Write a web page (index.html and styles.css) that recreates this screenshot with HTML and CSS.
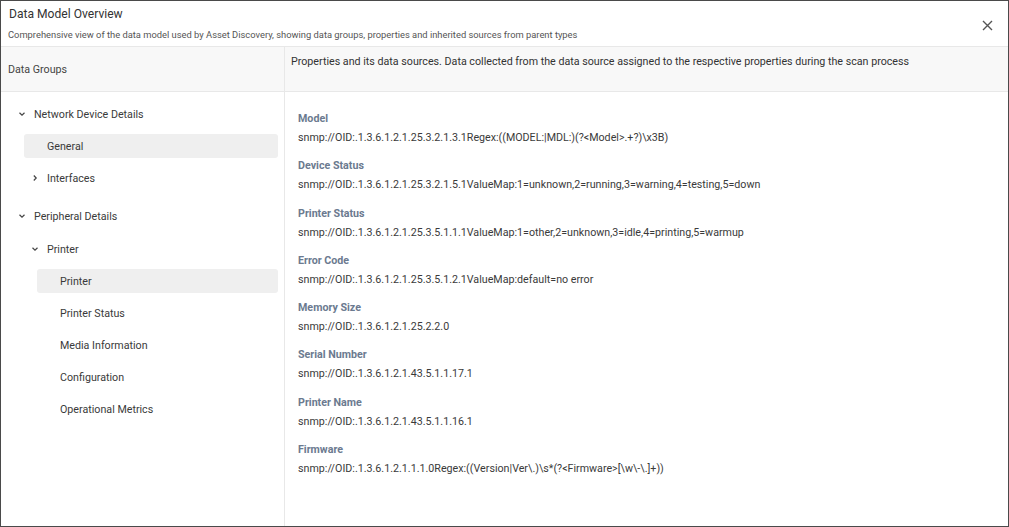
FILE: index.html
```html
<!DOCTYPE html>
<html>
<head>
<meta charset="utf-8">
<link rel="stylesheet" href="styles.css">
</head>
<body>
<div class="dialog">
  <header class="dlg-head">
    <div class="titles">
      <div class="title">Data Model Overview</div>
      <div class="subtitle">Comprehensive view of the data model used by Asset Discovery, showing data groups, properties and inherited sources from parent types</div>
    </div>
    <button class="close" aria-label="Close">
      <svg width="11" height="11" viewBox="0 0 11 11"><path d="M1 1L10 10M10 1L1 10" stroke="#555" stroke-width="1.4" fill="none"/></svg>
    </button>
  </header>
  <div class="main">
    <aside class="left">
      <div class="left-head">Data Groups</div>
      <div class="tree">
        <div class="group">
          <div class="row lvl0"><span class="lead"><svg class="chev" width="8" height="8" viewBox="0 0 8 8"><path d="M1.5 2.8L4 5.2L6.5 2.8" stroke="#444" stroke-width="1.2" fill="none"/></svg></span><span>Network Device Details</span></div>
          <div class="row lvl1 active"><span class="lead"></span><span>General</span></div>
          <div class="row lvl1"><span class="lead"><svg class="chev" width="8" height="8" viewBox="0 0 8 8"><path d="M2.8 1.5L5.2 4L2.8 6.5" stroke="#444" stroke-width="1.2" fill="none"/></svg></span><span>Interfaces</span></div>
        </div>
        <div class="group">
          <div class="row lvl0 group-title"><span class="lead"><svg class="chev" width="8" height="8" viewBox="0 0 8 8"><path d="M1.5 2.8L4 5.2L6.5 2.8" stroke="#444" stroke-width="1.2" fill="none"/></svg></span><span>Peripheral Details</span></div>
          <div class="row lvl1"><span class="lead"><svg class="chev" width="8" height="8" viewBox="0 0 8 8"><path d="M1.5 2.8L4 5.2L6.5 2.8" stroke="#444" stroke-width="1.2" fill="none"/></svg></span><span>Printer</span></div>
          <div class="row lvl2 active"><span class="lead"></span><span>Printer</span></div>
          <div class="row lvl2"><span class="lead"></span><span>Printer Status</span></div>
          <div class="row lvl2"><span class="lead"></span><span>Media Information</span></div>
          <div class="row lvl2"><span class="lead"></span><span>Configuration</span></div>
          <div class="row lvl2"><span class="lead"></span><span>Operational Metrics</span></div>
        </div>
      </div>
    </aside>
    <section class="right">
      <div class="right-head">Properties and its data sources. Data collected from the data source assigned to the respective properties during the scan process</div>
      <div class="props">
        <div class="prop"><div class="label">Model</div><div class="value">snmp://OID:.1.3.6.1.2.1.25.3.2.1.3.1Regex:((MODEL:|MDL:)(?&lt;Model&gt;.+?)\x3B)</div></div>
        <div class="prop"><div class="label">Device Status</div><div class="value">snmp://OID:.1.3.6.1.2.1.25.3.2.1.5.1ValueMap:1=unknown,2=running,3=warning,4=testing,5=down</div></div>
        <div class="prop"><div class="label">Printer Status</div><div class="value">snmp://OID:.1.3.6.1.2.1.25.3.5.1.1.1ValueMap:1=other,2=unknown,3=idle,4=printing,5=warmup</div></div>
        <div class="prop"><div class="label">Error Code</div><div class="value">snmp://OID:.1.3.6.1.2.1.25.3.5.1.2.1ValueMap:default=no error</div></div>
        <div class="prop"><div class="label">Memory Size</div><div class="value">snmp://OID:.1.3.6.1.2.1.25.2.2.0</div></div>
        <div class="prop"><div class="label">Serial Number</div><div class="value">snmp://OID:.1.3.6.1.2.1.43.5.1.1.17.1</div></div>
        <div class="prop"><div class="label">Printer Name</div><div class="value">snmp://OID:.1.3.6.1.2.1.43.5.1.1.16.1</div></div>
        <div class="prop"><div class="label">Firmware</div><div class="value">snmp://OID:.1.3.6.1.2.1.1.1.0Regex:((Version|Ver\.)\s*(?&lt;Firmware&gt;[\w\-\.]+))</div></div>
      </div>
    </section>
  </div>
</div>
</body>
</html>
```
FILE: styles.css
```css
* { box-sizing: border-box; }
html, body { margin: 0; padding: 0; background: #fff; }
body { font-family: Roboto, "Liberation Sans", Arial, sans-serif; color: #333; }

.dialog {
  width: 1009px;
  height: 527px;
  border: 1px solid #4a4a4a;
  display: flex;
  flex-direction: column;
  background: #fff;
}

.dlg-head {
  height: 46px;
  flex: none;
  display: flex;
  align-items: flex-start;
  justify-content: space-between;
  border-bottom: 1px solid #e8e8e8;
}
.titles { padding: 5px 0 0 8px; }
.title { font-size: 12.1px; line-height: 17px; color: #333; }
.subtitle { font-size: 9.35px; line-height: 13px; color: #555; margin-top: 5px; margin-left: -1px; }
.close {
  border: 0; background: transparent; padding: 0;
  width: 20px; height: 20px; margin: 14px 11px 0 0;
  display: flex; align-items: center; justify-content: center;
}

.main { flex: 1; display: flex; min-height: 0; }

.left {
  width: 284px;
  flex: none;
  border-right: 1px solid #e8e8e8;
}
.left-head {
  height: 45px;
  background: #f8f8f8;
  border-bottom: 1px solid #e8e8e8;
  display: flex;
  align-items: center;
  padding-left: 7px;
  font-size: 10.7px;
  color: #444;
}
.tree {
  padding-top: 10px;
  display: flex;
  flex-direction: column;
  gap: 14px;
}
.group { display: flex; flex-direction: column; gap: 8px; }
.group-title { margin-bottom: 1px; }
.row {
  height: 24px;
  display: flex;
  align-items: center;
  font-size: 10.7px;
  color: #3a3a3a;
  margin-right: 6px;
  border-radius: 3px;
}
.row.lvl0 { margin-left: 10px; }
.row.lvl1 { margin-left: 23px; }
.row.lvl2 { margin-left: 36px; }
.row.active { background: #efefef; }
.lead { width: 23px; flex: none; display: flex; align-items: center; padding-left: 7px; }
.chev { display: block; }

.right { flex: 1; min-width: 0; }
.right-head {
  height: 45px;
  background: #f8f8f8;
  border-bottom: 1px solid #e8e8e8;
  padding: 8px 6px 0 6px;
  font-size: 10.7px;
  line-height: 14px;
  color: #333;
}
.props {
  padding: 19px 13px 0 13px;
  display: flex;
  flex-direction: column;
  gap: 12.3px;
}
.label { font-size: 10.7px; line-height: 16px; font-weight: 700; color: #6b7a8f; }
.value { font-size: 10.7px; line-height: 16px; color: #3a3a3a; margin-top: 3px; white-space: nowrap; }
```
